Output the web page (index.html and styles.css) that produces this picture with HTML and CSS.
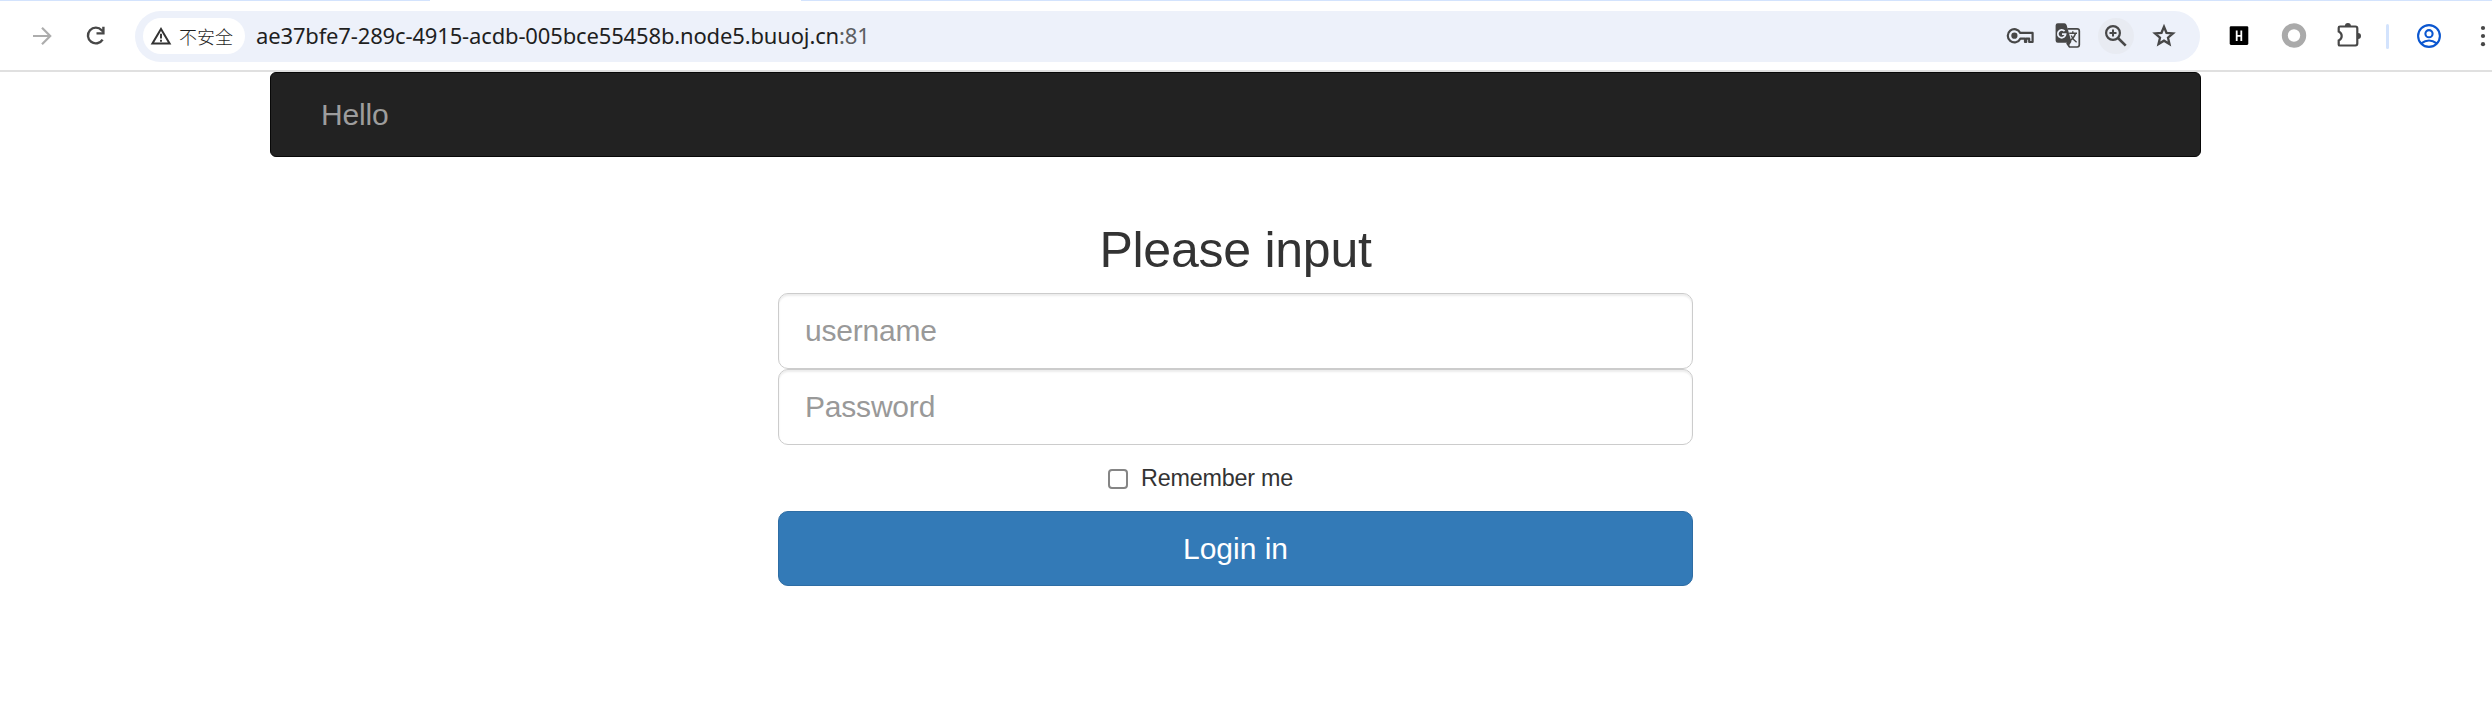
FILE: index.html
```html
<!DOCTYPE html>
<html lang="zh-CN">
<head>
<meta charset="utf-8">
<title>Login</title>
<link rel="stylesheet" href="styles.css">
</head>
<body>
<header class="browser">
  <div class="tab-edge"><span class="edge-left"></span><span class="edge-right"></span></div>
  <div class="toolbar">
    <svg class="icon forward" viewBox="0 0 32 32"><path d="M7 16H24M16 7.8L24.2 16L16 24.2" fill="none" stroke="#adadad" stroke-width="2.2"/></svg>
    <svg class="icon reload" viewBox="0 0 32 32"><path d="M22.6 19.6A7.9 7.9 0 1 1 21.7 10.2L23 11.5" fill="none" stroke="#474747" stroke-width="2.4"/><path d="M24.6 6.8V14.5H16.5V12.2H22.2V6.8Z" fill="#474747"/></svg>
    <div class="address">
      <div class="chip">
        <svg class="warn" viewBox="0 0 22 20"><path d="M11 3L19.6 17.6H2.4Z" fill="none" stroke="#333" stroke-width="2"/><path d="M11 7.8V12.6M11 13.8V15.8" stroke="#333" stroke-width="1.9"/></svg>
        <span>不安全</span>
      </div>
      <div class="url">ae37bfe7-289c-4915-acdb-005bce55458b.node5.buuoj.cn<span class="port">:81</span></div>
      <div class="actions">
        <span class="action"><svg class="icon" viewBox="0 0 32 32"><path d="M16.3 12.9H28.6V22H25.2V18.7H22.2V22H21V18.7H16.3A6.6 6.6 0 1 1 16.3 12.9Z" fill="none" stroke="#474747" stroke-width="2.2" stroke-linejoin="round"/><circle cx="10.4" cy="15.7" r="3.1" fill="#474747"/></svg></span>
        <span class="action"><svg class="icon" viewBox="0 0 32 32"><path d="M15.5 8.8H25.2Q27.3 8.8 27.3 11V24.8Q27.3 27 25.2 27H17.5L14.8 23" fill="none" stroke="#474747" stroke-width="1.7"/><path d="M5.8 3.2H12.3Q14.1 3.2 14.6 5L19.4 21.8L16.4 26.5L14.8 22.7H5.8Q3.6 22.7 3.6 20.5V5.4Q3.6 3.2 5.8 3.2Z" fill="#474747"/><path d="M12.6 11.2A3.9 3.9 0 1 0 13.6 14.1H10" fill="none" stroke="#edf1fa" stroke-width="1.8"/><path d="M17.2 13.3H25M20.8 11.3V13.3M23.5 13.5Q22 18.4 17.7 21M19.2 15.5Q20.8 19.3 24.6 22.3" fill="none" stroke="#474747" stroke-width="1.4"/></svg></span>
        <span class="action"><span class="halo"><svg class="icon" viewBox="0 0 32 32"><circle cx="13" cy="13" r="6.9" fill="none" stroke="#474747" stroke-width="2.2"/><path d="M18 18L25.7 25.7" stroke="#474747" stroke-width="2.6"/><path d="M13 9.5V16.5M9.5 13H16.5" stroke="#474747" stroke-width="2"/></svg></span></span>
        <span class="action"><svg class="icon" viewBox="0 0 32 32"><path d="M16 6.7L18.5 12.8L25 13.4L20 17.7L21.5 24.1L16 20.7L10.5 24.1L12 17.7L7 13.4L13.5 12.8Z" fill="none" stroke="#474747" stroke-width="2.3"/></svg></span>
      </div>
    </div>
    <svg class="icon ext-h" viewBox="0 0 32 32"><rect x="6.7" y="6.3" width="18.6" height="18.6" rx="1.3" fill="#000"/><path d="M13.7 10.5V21M18.3 10.5V21M13.7 15.8H18.3" stroke="#fff" stroke-width="1.8"/></svg>
    <svg class="icon ext-ring" viewBox="0 0 32 32"><circle cx="16" cy="15.5" r="9.2" fill="none" stroke="#aaa" stroke-width="6"/></svg>
    <svg class="icon ext-puzzle" viewBox="0 0 32 32"><path d="M7 6.5H22.4Q24.3 6.5 24.3 8.4V23.6Q24.3 25.5 22.4 25.5H6.8Q5.7 25.5 5.7 24.4V20.5Q8.7 19.2 8.7 16Q8.7 12.8 5.7 11.5V7.8Q5.7 6.5 7 6.5Z" fill="none" stroke="#474747" stroke-width="2.2"/><path d="M11.9 6A3 3 0 0 1 17.9 6ZM25 13A3 3 0 0 1 25 19Z" fill="#474747"/></svg>
    <span class="divider"></span>
    <svg class="icon profile" viewBox="0 0 32 32"><g fill="none" stroke="#0b57d0" stroke-width="2.1"><circle cx="16" cy="16" r="10.9"/><circle cx="16" cy="13.7" r="3.6"/><path d="M8.2 23.4Q16 17.6 23.8 23.4"/></g></svg>
    <svg class="icon menu" viewBox="0 0 32 32"><g fill="#474747"><circle cx="16" cy="8" r="2.1"/><circle cx="16" cy="16" r="2.1"/><circle cx="16" cy="24.2" r="2.1"/></g></svg>
  </div>
</header>
<main class="page">
  <nav class="navbar"><a class="brand">Hello</a></nav>
  <form class="signin">
    <h2 class="title">Please input</h2>
    <input class="field" type="text" placeholder="username">
    <input class="field" type="password" placeholder="Password">
    <label class="remember"><span class="box"></span>Remember me</label>
    <button class="submit" type="button">Login in</button>
  </form>
</main>
</body>
</html>
```
FILE: styles.css
```css
* { box-sizing: border-box; }
body {
  margin: 0;
  height: 724px;
  overflow: hidden;
  background: #fff;
  color: #333;
  font-family: "Liberation Sans", Arial, sans-serif;
}
.browser { height: 72px; border-bottom: 2px solid #e0e0e0; }
.tab-edge { display: flex; justify-content: space-between; height: 1px; }
.edge-left { width: 430px; background: #d3e3fd; }
.edge-right { width: 1691px; background: #d3e3fd; }
.toolbar { display: flex; align-items: center; height: 69px; padding-top: 1px; }
.icon { display: block; flex: none; width: 32px; height: 32px; }
.forward { margin-left: 26px; }
.reload { margin-left: 22px; }
.address {
  display: flex;
  align-items: center;
  flex: none;
  width: 2065px;
  height: 51px;
  margin-left: 23px;
  padding: 0 12px 0 8px;
  border-radius: 26px;
  background: #edf1fa;
}
.chip {
  display: flex;
  align-items: center;
  width: 102px;
  height: 36px;
  padding-left: 7px;
  border-radius: 18px;
  background: #fff;
  color: #1f1f1f;
  font: 300 18px/36px "Noto Sans CJK SC", sans-serif;
  white-space: nowrap;
}
.warn { flex: none; width: 22px; height: 20px; margin-right: 7px; }
.url {
  margin-left: 11px;
  padding-bottom: 2px;
  color: #1f1f1f;
  font: 22px/36px "Noto Sans", sans-serif;
  letter-spacing: -0.15px;
  white-space: nowrap;
}
.port { color: #5c5e62; }
.actions { display: flex; margin-left: auto; }
.action { display: grid; place-items: center; width: 48px; height: 36px; }
.halo { display: grid; place-items: center; width: 36px; height: 36px; border-radius: 50%; background: #e8ebf2; }
.ext-h,
.ext-ring,
.ext-puzzle { margin-left: 23px; }
.divider { width: 3px; height: 25px; margin-left: 21px; border-radius: 2px; background: #d3e3fd; }
.profile { margin-left: 24px; }
.menu { margin: 0 -7px 0 22px; }
.page { width: 1931px; margin-left: 270px; }
.navbar {
  height: 85px;
  padding-left: 50px;
  border: 1px solid #080808;
  border-radius: 6px;
  background: #222;
}
.brand { color: #9d9d9d; font-size: 30px; line-height: 84px; letter-spacing: -0.2px; }
.signin { display: flex; flex-direction: column; width: 915px; margin: 66px 0 0 508px; }
.title { margin: 0 0 15px; font-size: 50px; font-weight: 400; line-height: 55px; text-align: center; letter-spacing: -0.25px; }
.field {
  width: 100%;
  height: 76px;
  padding: 0 26px;
  border: 1px solid #ccc;
  border-radius: 10px;
  background: #fff;
  box-shadow: inset 0 2px 2px rgba(0, 0, 0, .075);
  font: 30px "Liberation Sans", Arial, sans-serif;
  letter-spacing: -0.2px;
}
.field::placeholder { color: #999; opacity: 1; }
.remember {
  display: flex;
  align-items: center;
  gap: 13px;
  height: 33px;
  margin: 17px 0 16px 330px;
  font-size: 23.33px;
  letter-spacing: -0.2px;
}
.box { width: 20px; height: 20px; border: 2px solid #858585; border-radius: 4px; }
.submit {
  height: 75px;
  padding: 0;
  border: 1px solid #2e6da4;
  border-radius: 10px;
  background: #337ab7;
  color: #fff;
  font: 30px "Liberation Sans", Arial, sans-serif;
}
```
